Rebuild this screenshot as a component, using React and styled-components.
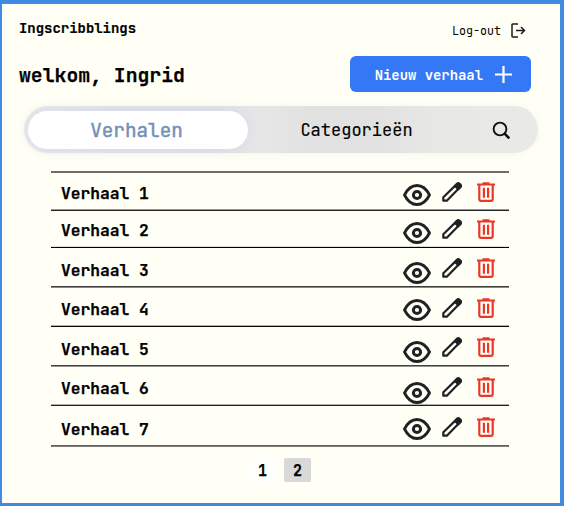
import React from "react";
import styled, { createGlobalStyle } from "styled-components";

const Global = createGlobalStyle`
  * { box-sizing: border-box; }
  body { margin: 0; background: #fffff6; }
  button { border: 0; padding: 0; background: none; font: inherit; color: inherit; }
  svg { display: block; }
`;

const Page = styled.main`
  width: 564px;
  height: 506px;
  overflow: hidden;
  border: solid #418ae2;
  border-width: 4px 4px 3px 2px;
  background: #fffff6;
  color: #000;
  font-family: "JetBrains Mono", "DejaVu Sans Mono", monospace;
`;

const TopBar = styled.header`
  display: flex;
  justify-content: space-between;
  height: 52px;
  padding: 14px 34px 0 17px;
`;

const Brand = styled.h1`
  margin: 0;
  font-size: 13.95px;
  line-height: 20px;
  font-weight: 700;
  -webkit-text-stroke: 0.2px;
`;

const Logout = styled.button`
  display: flex;
  align-items: center;
  gap: 10px;
  height: 25px;
  font-size: 11.7px;
`;

const Welcome = styled.section`
  display: flex;
  justify-content: space-between;
  height: 50px;
  padding: 0 29px 0 17px;
`;

const Greeting = styled.h2`
  margin: 7px 0 0;
  font-size: 19.75px;
  line-height: 24px;
  font-weight: 700;
  -webkit-text-stroke: 0.25px;
`;

const NewStory = styled.button`
  display: flex;
  align-items: center;
  justify-content: flex-end;
  gap: 12px;
  width: 181px;
  height: 36px;
  padding: 1px 19px 0 0;
  border-radius: 6px;
  background: #3478f6;
  color: #fff;
  font-size: 13.9px;
  font-weight: 700;
`;

const Tabs = styled.nav`
  display: flex;
  align-items: center;
  width: 514px;
  height: 47px;
  margin-left: 22px;
  padding: 0 27px 0 4px;
  border-radius: 24px;
  background: linear-gradient(90deg, #e8e8ea 0%, #e0e2ea 18%, #e0e2e8 36%, #e6e6e6 46%, #e1e1e1 58%, #e1e1e1 68%, #e8e8e7 82%, #e9e9e8 100%);
  box-shadow: 0 1px 8px rgba(90, 90, 70, 0.06);
`;

const ActiveTab = styled.button`
  width: 220px;
  height: 38px;
  padding-right: 3px;
  border-radius: 19px;
  background: #fff;
  box-shadow: 0 0 8px rgba(190, 200, 225, 0.35);
  color: #7591b5;
  font-size: 19.3px;
  -webkit-text-stroke: 0.5px #7591b5;
`;

const Tab = styled.button`
  flex: 1;
  padding-right: 27px;
  font-size: 17px;
  -webkit-text-stroke: 0.15px;
`;

const SearchButton = styled.button`
  padding-top: 2px;
`;

const Stories = styled.ul`
  width: 458px;
  margin: 18px 0 0 49px;
  padding: 0;
  list-style: none;
  border-top: 2px solid #6c6c68;
`;

const Story = styled.li`
  display: flex;
  align-items: flex-start;
  height: ${(p) => p.$height}px;
  padding: ${(p) => p.$top}px 14px 0 10px;
  border-bottom: 1px solid ${(p) => p.$line[1]};
  box-shadow: inset 0 -1px ${(p) => p.$line[0]};
  font-size: 16.25px;
  line-height: 20px;
  font-weight: 700;
  -webkit-text-stroke: 0.25px;
`;

const Title = styled.span`
  flex: 1;
  padding-top: ${(p) => p.$drop}px;
`;

const Action = styled.button`
  margin: ${(p) => p.$shift || 0}px 0 0 ${(p) => p.$gap || 0}px;
`;

const Pages = styled.div`
  display: flex;
  gap: 8px;
  margin: 11px 0 0 247px;
`;

const PageButton = styled.button`
  width: 27px;
  height: 24px;
  padding-top: 1px;
  border-radius: 2px;
  background: ${(p) => (p.$current ? "#d9d9d9" : "#fff")};
  font-size: 15px;
  font-weight: 700;
  -webkit-text-stroke: 0.25px;
`;

const LogoutIcon = () => (
  <svg width="15" height="15" viewBox="0 0 15 15" fill="none" stroke="#1d1d1d" strokeWidth="1.5">
    <path d="M7 1H1.7Q1 1 1 1.7v11.6q0 .7.7.7H7M5 7.5h8.5M10 4l3.5 3.5L10 11" />
  </svg>
);

const PlusIcon = () => (
  <svg width="17" height="17" viewBox="0 0 17 17" stroke="#fff" strokeWidth="2.2">
    <path d="M8.5 0v17M0 8.5h17" />
  </svg>
);

const SearchIcon = () => (
  <svg width="19" height="19" viewBox="0 0 19 19" fill="none" stroke="#111" strokeWidth="1.9">
    <circle cx="8" cy="8" r="6.4" />
    <path d="M12 12l5.3 5.3" strokeWidth="2.5" />
  </svg>
);

const EyeIcon = () => (
  <svg width="28" height="22" viewBox="0 0 28 22" fill="none" stroke="#202124" strokeWidth="2.8">
    <path d="M1.5 11C4 6 8 1.5 14 1.5S24 6 26.5 11C24 16 20 20.5 14 20.5S4 16 1.5 11Z" strokeLinejoin="round" />
    <circle cx="14" cy="11" r="3.6" strokeWidth="3" />
  </svg>
);

const PencilIcon = () => (
  <svg width="20" height="20" viewBox="0 -0.3 20 20" fill="none" stroke="#202124" strokeWidth="2.2" strokeLinejoin="round">
    <path d="M1.3 18.4v-3.4L15.3 1.3l3.2 3.2L4.8 18.4Z" />
    <path d="M13 3.7l2.5-2.4q1-.8 2 .1l1.1 1.1q.9 1 .1 2L16.3 7Z" fill="#202124" />
  </svg>
);

const TrashIcon = () => (
  <svg width="18" height="20" viewBox="0 -0.3 18 20" fill="none" stroke="#eb3728" strokeWidth="2.2">
    <path d="M0 2.2h18M5.5 1h7M2.3 2v15.2q0 1.3 1.3 1.3h10.8q1.3 0 1.3-1.3V2M6.9 5.4v10M11.1 5.4v10" />
  </svg>
);

const stories = [
  { title: "Verhaal 1", height: 38, top: 9, eye: 2, drop: 1, line: ["#999995", "#222222"] },
  { title: "Verhaal 2", height: 37, top: 8, eye: 3, drop: 1, line: ["#dcdcd6", "#000000"] },
  { title: "Verhaal 3", height: 40, top: 10, eye: 4, drop: 2, line: ["#3d3d3b", "#888884"] },
  { title: "Verhaal 4", height: 39, top: 10, eye: 1, drop: 1, line: ["#b4b4af", "#050505"] },
  { title: "Verhaal 5", height: 40, top: 10, eye: 4, drop: 2, line: ["#444442", "#92928e"] },
  { title: "Verhaal 6", height: 39, top: 10, eye: 5, drop: 1, line: ["#b0b0ab", "#202020"] },
  { title: "Verhaal 7", height: 41, top: 11, eye: 1, drop: 2, line: ["#62625f", "#7c7c78"] },
];

export default function App() {
  return (
    <>
      <Global />
      <Page>
        <TopBar>
          <Brand>Ingscribblings</Brand>
          <Logout>Log-out <LogoutIcon /></Logout>
        </TopBar>
        <Welcome>
          <Greeting>welkom, Ingrid</Greeting>
          <NewStory>Nieuw verhaal <PlusIcon /></NewStory>
        </Welcome>
        <Tabs>
          <ActiveTab>Verhalen</ActiveTab>
          <Tab>Categorieën</Tab>
          <SearchButton aria-label="Zoeken"><SearchIcon /></SearchButton>
        </Tabs>
        <Stories>
          {stories.map((s) => (
            <Story key={s.title} $height={s.height} $top={s.top} $line={s.line}>
              <Title $drop={s.drop}>{s.title}</Title>
              <Action aria-label="Bekijken" $shift={s.eye}><EyeIcon /></Action>
              <Action aria-label="Bewerken" $gap={11}><PencilIcon /></Action>
              <Action aria-label="Verwijderen" $gap={15}><TrashIcon /></Action>
            </Story>
          ))}
        </Stories>
        <Pages>
          <PageButton>1</PageButton>
          <PageButton $current>2</PageButton>
        </Pages>
      </Page>
    </>
  );
}
